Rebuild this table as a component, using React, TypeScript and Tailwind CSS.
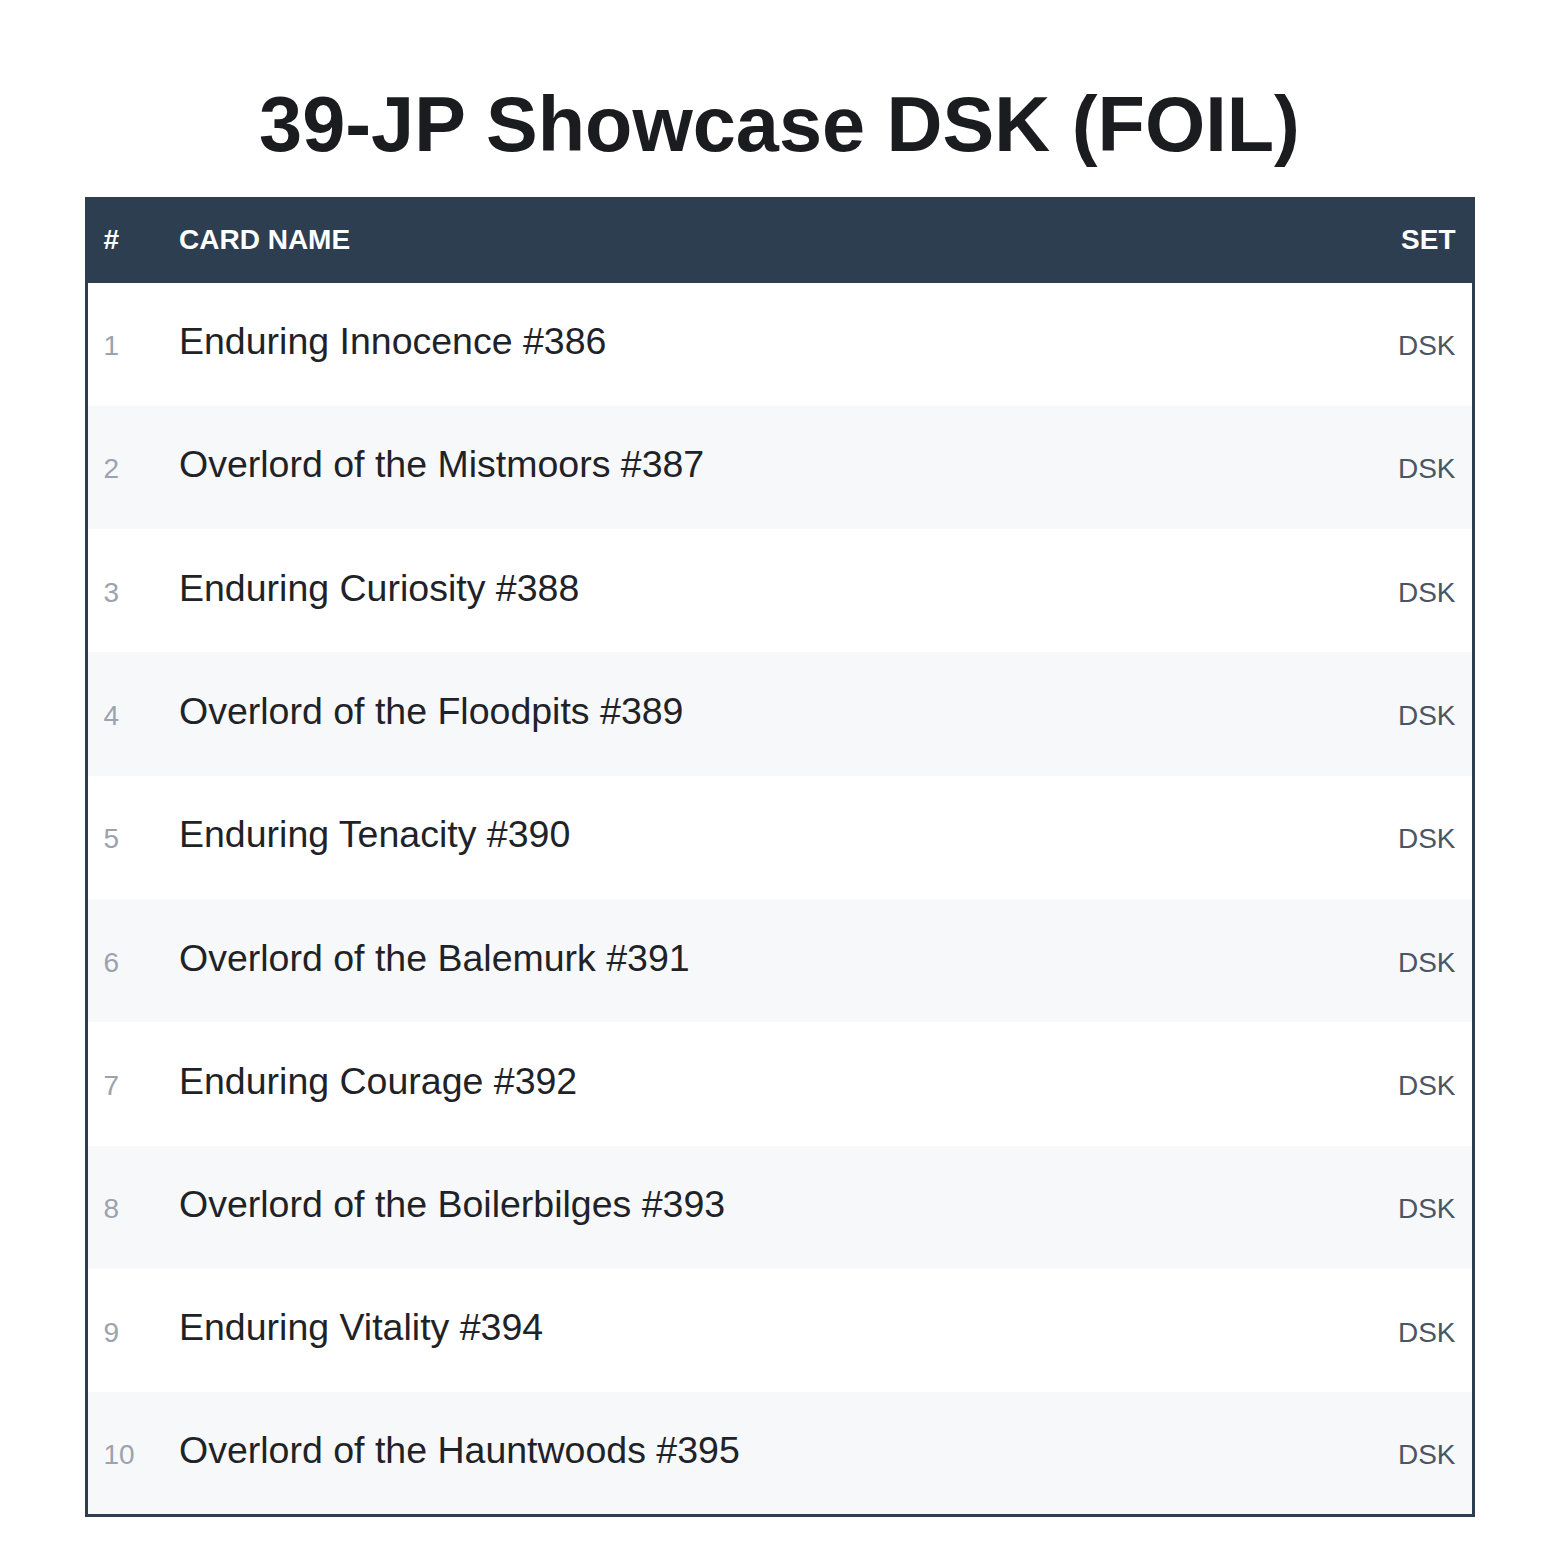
const CARDS = [
  "Enduring Innocence #386",
  "Overlord of the Mistmoors #387",
  "Enduring Curiosity #388",
  "Overlord of the Floodpits #389",
  "Enduring Tenacity #390",
  "Overlord of the Balemurk #391",
  "Enduring Courage #392",
  "Overlord of the Boilerbilges #393",
  "Enduring Vitality #394",
  "Overlord of the Hauntwoods #395",
];

export default function App() {
  return (
    <div
      className="min-h-screen bg-white px-[84.5px] pt-[78px]"
      style={{ fontFamily: '"Liberation Sans", Arial, sans-serif' }}
    >
      <h1 className="text-center text-[77.5px] font-bold leading-[1.2] text-[#1b1c20] mb-[26px]">
        39-JP Showcase DSK (FOIL)
      </h1>

      <table className="w-full border-collapse border-[3px] border-[#2c3e50]">
        <thead>
          <tr className="h-[84px] bg-[#2c3e50] text-white text-[28px] font-bold uppercase">
            <th className="w-[93px] pl-4 pb-[2px] text-left">#</th>
            <th className="pb-[2px] text-left">Card Name</th>
            <th className="pr-4 pb-[2px] text-right">Set</th>
          </tr>
        </thead>
        <tbody>
          {CARDS.map((name, i) => (
            <tr
              key={name}
              className={`h-[123.3px] ${i % 2 === 1 ? "bg-[#f7f8fa]" : "bg-white"}`}
            >
              <td className="pl-4 pt-[4px] text-[28px] text-[#9ca3af]">{i + 1}</td>
              <td className="pb-[6px] text-[37.5px] text-[#1f2328]">{name}</td>
              <td className="pr-4 pt-[4px] text-right text-[28px] text-[#4b5563]">DSK</td>
            </tr>
          ))}
        </tbody>
      </table>
    </div>
  );
}
